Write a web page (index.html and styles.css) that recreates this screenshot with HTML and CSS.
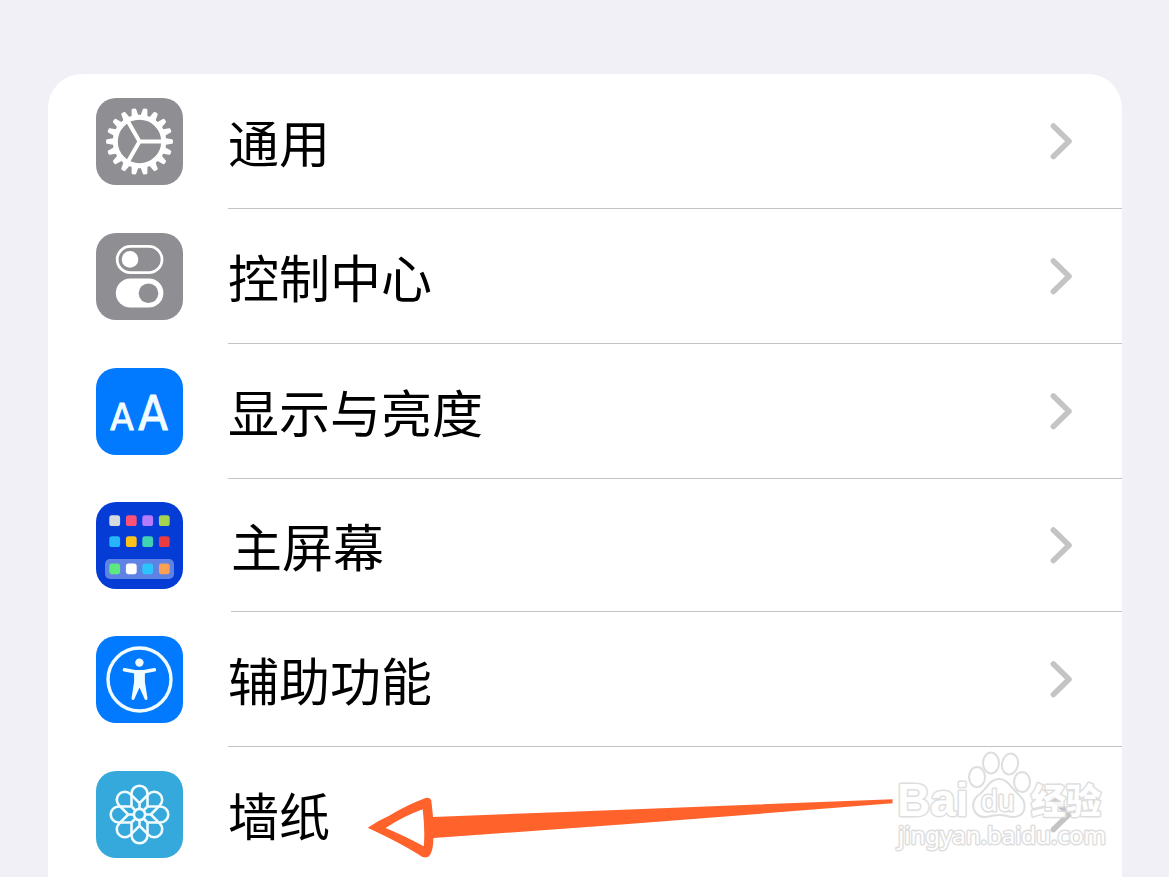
FILE: index.html
```html
<!DOCTYPE html>
<html lang="zh-CN">
<head>
    <meta charset="UTF-8">
    <meta name="viewport" content="width=device-width, initial-scale=1">
    <title>设置</title>
    <link rel="stylesheet" href="styles.css">
</head>
<body>

<!-- shared chevron -->
<svg class="defs" aria-hidden="true">
    <symbol id="chevron" viewBox="0 0 24 40">
        <path d="M4.4 5 L20 20.3 L4.4 35.5" fill="none" stroke="#c4c4c6" stroke-width="5.6" stroke-linecap="round" stroke-linejoin="round"/>
    </symbol>
</svg>

<main class="settings">
    <nav class="list">

        <!-- General -->
        <a class="row" href="#general">
            <svg class="icon gray" viewBox="0 0 87 87" aria-hidden="true">
                <defs>
                    <path id="tooth" d="M25 -3.6 L32.4 -2.3 Q33.4 -2 33.4 -1.2 V1.2 Q33.4 2 32.4 2.3 L25 3.6 Z"/>
                    <g id="teeth">
                        <use href="#tooth"/>
                        <use href="#tooth" transform="rotate(20)"/>
                        <use href="#tooth" transform="rotate(40)"/>
                    </g>
                </defs>
                <g transform="translate(43.5 43.5)" fill="#fff">
                    <use href="#teeth"/>
                    <use href="#teeth" transform="rotate(60)"/>
                    <use href="#teeth" transform="rotate(120)"/>
                    <use href="#teeth" transform="rotate(180)"/>
                    <use href="#teeth" transform="rotate(240)"/>
                    <use href="#teeth" transform="rotate(300)"/>
                    <circle r="24.2" fill="none" stroke="#fff" stroke-width="5"/>
                    <path d="M0 0 H23 M0 0 L-11.5 -20 M0 0 L-11.5 20" stroke="#fff" stroke-width="4"/>
                </g>
            </svg>
            <span class="body"><span class="label">通用</span><svg class="chevron"><use href="#chevron"/></svg></span>
        </a>

        <!-- Control Center -->
        <a class="row" href="#control-center">
            <svg class="icon gray" viewBox="0 0 87 87" aria-hidden="true">
                <rect x="21.2" y="13.3" width="44.8" height="26.4" rx="13.2" fill="none" stroke="#fff" stroke-width="2.8"/>
                <circle cx="34" cy="26.4" r="8.3" fill="#fff"/>
                <rect x="19.8" y="45.6" width="47.6" height="29" rx="14.5" fill="#fff"/>
                <circle cx="52.5" cy="60.2" r="9.8" fill="#8e8e93"/>
            </svg>
            <span class="body"><span class="label">控制中心</span><svg class="chevron"><use href="#chevron"/></svg></span>
        </a>

        <!-- Display & Brightness -->
        <a class="row" href="#display">
            <svg class="icon blue" viewBox="0 0 87 87" aria-hidden="true">
                <g class="aa" text-anchor="middle">
                    <text x="26" y="62" font-size="38">A</text>
                    <text x="57" y="62" font-size="48">A</text>
                </g>
            </svg>
            <span class="body"><span class="label">显示与亮度</span><svg class="chevron"><use href="#chevron"/></svg></span>
        </a>

        <!-- Home Screen -->
        <a class="row home" href="#home-screen">
            <svg class="icon navy" viewBox="0 0 87 87" aria-hidden="true">
                <rect x="9" y="57" width="69" height="20" rx="5" fill="#5f83e4"/>
                <rect x="13.3" y="13.3" width="10.8" height="10.8" rx="2.6" fill="#d6dade"/>
                <rect x="29.9" y="13.3" width="10.8" height="10.8" rx="2.6" fill="#fc5278"/>
                <rect x="46.3" y="13.3" width="10.8" height="10.8" rx="2.6" fill="#b57bfc"/>
                <rect x="62.9" y="13.3" width="10.8" height="10.8" rx="2.6" fill="#a5d350"/>
                <rect x="13.3" y="34.3" width="10.8" height="10.8" rx="2.6" fill="#26b4fb"/>
                <rect x="29.9" y="34.3" width="10.8" height="10.8" rx="2.6" fill="#fcc21c"/>
                <rect x="46.3" y="34.3" width="10.8" height="10.8" rx="2.6" fill="#40d2b2"/>
                <rect x="62.9" y="34.3" width="10.8" height="10.8" rx="2.6" fill="#e83c40"/>
                <rect x="13.3" y="61.4" width="10.8" height="10.8" rx="2.6" fill="#5ee880"/>
                <rect x="29.9" y="61.4" width="10.8" height="10.8" rx="2.6" fill="#fff"/>
                <rect x="46.3" y="61.4" width="10.8" height="10.8" rx="2.6" fill="#2bc4fc"/>
                <rect x="62.9" y="61.4" width="10.8" height="10.8" rx="2.6" fill="#fba055"/>
            </svg>
            <span class="body"><span class="label">主屏幕</span><svg class="chevron"><use href="#chevron"/></svg></span>
        </a>

        <!-- Accessibility -->
        <a class="row" href="#accessibility">
            <svg class="icon blue" viewBox="0 0 87 87" aria-hidden="true">
                <circle cx="43.5" cy="43.5" r="31.5" fill="none" stroke="#f0fcff" stroke-width="3.4"/>
                <g fill="#f0fcff" stroke="#f0fcff" stroke-linecap="round" stroke-linejoin="round">
                    <circle cx="43.4" cy="26.6" r="4.2" stroke="none"/>
                    <path d="M28.5 33.8 L39 35.8 H48 L58.4 33.8" fill="none" stroke-width="3.6"/>
                    <path d="M39.6 36 H47.4 V46 L50 62.4 L43.5 48 L37 62.4 L39.6 46 Z" stroke-width="3"/>
                </g>
            </svg>
            <span class="body"><span class="label">辅助功能</span><svg class="chevron"><use href="#chevron"/></svg></span>
        </a>

        <!-- Wallpaper -->
        <a class="row" href="#wallpaper">
            <svg class="icon sky" viewBox="0 0 87 87" aria-hidden="true">
                <defs>
                    <path id="petal" d="M-8 -8 V-20.8 A8 8 0 0 1 8 -20.8 V-8 M0 -11.3 V-5"/>
                </defs>
                <g transform="translate(43.5 43.5)" fill="none" stroke="#f0fcff" stroke-width="2.6" stroke-linejoin="round">
                    <use href="#petal"/>
                    <use href="#petal" transform="rotate(45)"/>
                    <use href="#petal" transform="rotate(90)"/>
                    <use href="#petal" transform="rotate(135)"/>
                    <use href="#petal" transform="rotate(180)"/>
                    <use href="#petal" transform="rotate(225)"/>
                    <use href="#petal" transform="rotate(270)"/>
                    <use href="#petal" transform="rotate(315)"/>
                    <circle r="5.6"/>
                </g>
            </svg>
            <span class="body"><span class="label">墙纸</span><svg class="chevron"><use href="#chevron"/></svg></span>

            <svg class="arrow" viewBox="48 50 1476 183" preserveAspectRatio="none" aria-hidden="true">
                <path fill="#ff622b" fill-rule="evenodd" d="M50 142 Q76 122 110 106 Q160 74 212 53 Q224 49 228 60 L233 110 L620 94 L1520 57 V69 L780 131 L234 173 Q234 212 222 228 Q214 234 202 229 Q150 192 50 142 Z M100 143 Q150 165 207 198 Q211 150 204 87 Q150 108 100 143 Z"/>
            </svg>

            <svg class="watermark" viewBox="0 0 260 142" role="img" aria-label="Baidu 经验">
                <g class="outline">
                    <text class="latin" x="17" y="81" font-size="46">Bai</text>
                    <ellipse cx="97" cy="42" rx="8" ry="10"/>
                    <ellipse cx="111" cy="28" rx="8" ry="10.5"/>
                    <ellipse cx="130" cy="29" rx="8" ry="10.5" transform="rotate(12 130 29)"/>
                    <ellipse cx="142" cy="47" rx="8" ry="10"/>
                    <path d="M119 44 C110 44 107 53 100 59 C94 63 92 69 94 75 C97 82 104 83 111 81 Q119 79 127 81 C134 83 142 82 144 75 C146 68 143 63 138 59 C131 53 128 44 119 44 Z"/>
                    <text class="du" x="101" y="76" font-size="30">du</text>
                    <text class="cjk" x="151" y="79" font-size="35">经验</text>
                    <text class="site" x="18" y="109" font-size="24">jingyan.baidu.com</text>
                </g>
            </svg>
        </a>

    </nav>
</main>

</body>
</html>
```
FILE: styles.css
```css
* {
    box-sizing: border-box;
}

body {
    margin: 0;
    background: #f1f0f6;
    color: #000;
    font-family: "Noto Sans CJK SC", sans-serif;
}

.defs {
    display: none;
}

.settings {
    padding: 74px 47px 0 48px;
}

.list {
    background: #fff;
    border-radius: 34px 34px 0 0;
}

.row {
    position: relative;
    display: flex;
    align-items: center;
    gap: 45px;
    height: 135px;
    padding-left: 48px;
    color: inherit;
    text-decoration: none;
}

.row.home {
    gap: 48px;
    height: 133px;
}

.icon {
    flex: none;
    width: 87px;
    height: 87px;
    border-radius: 20px;
}

.gray {
    background: #8e8e93;
}

.blue {
    background: #027aff;
}

.navy {
    background: #053cd6;
}

.sky {
    background: #35a9db;
}

.aa {
    fill: #f0fcff;
    stroke: #f0fcff;
    stroke-width: 1px;
    stroke-linejoin: round;
    font-family: "DejaVu Sans Condensed", "DejaVu Sans", sans-serif;
}

.body {
    flex: 1;
    display: flex;
    align-items: center;
    justify-content: space-between;
    height: 100%;
    padding-right: 49px;
    border-bottom: 1px solid #c3c3c5;
}

.label {
    font-size: 51px;
    line-height: 60px;
}

.chevron {
    width: 24px;
    height: 40px;
}

/* hand-drawn pointer to the wallpaper row */
.arrow {
    position: absolute;
    top: 50px;
    left: 319px;
    width: 527px;
    height: 61px;
}

.watermark {
    position: absolute;
    top: -12px;
    right: -18px;
    width: 260px;
    height: 142px;
}

.outline {
    fill: #fff;
    stroke: #d9d9d9;
    stroke-width: 2px;
    opacity: 0.85;
}

.outline text {
    stroke-width: 3px;
    stroke-linejoin: round;
    paint-order: stroke;
}

.latin {
    font-family: "Liberation Sans", sans-serif;
    font-weight: bold;
}

.du {
    font-family: "Liberation Sans", sans-serif;
}

.cjk {
    font-family: "Noto Sans CJK SC", sans-serif;
    font-weight: 900;
}

.site {
    font-family: "Noto Sans", sans-serif;
}
```
